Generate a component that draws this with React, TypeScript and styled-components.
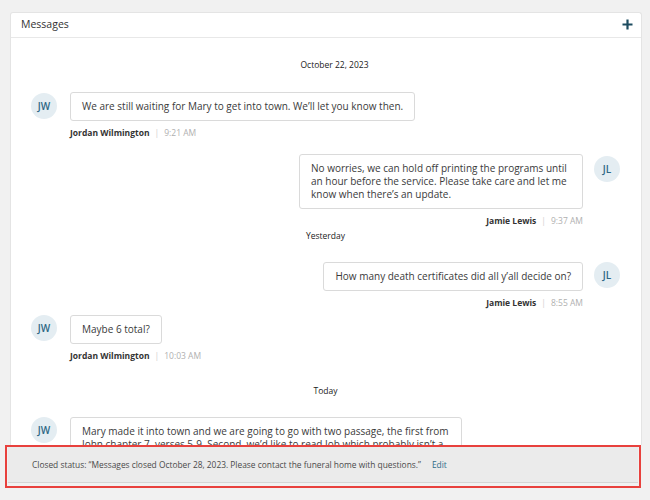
import React from "react";
import styled, { createGlobalStyle } from "styled-components";

const GlobalStyle = createGlobalStyle`
  html, body {
    margin: 0;
    padding: 0;
    background: #f1f1f1;
    font-family: "Open Sans", "Noto Sans", sans-serif;
    color: #333;
  }
`;

const Page = styled.div`
  width: 650px;
  height: 500px;
  overflow: hidden;
  padding-top: 12px;
  box-sizing: border-box;
  display: flex;
  flex-direction: column;
`;

const Card = styled.section`
  margin: 0 8px 0 10px;
  background: #fff;
  border: 1px solid #e4e4e4;
  border-bottom: none;
  border-radius: 3px 3px 0 0;
  display: flex;
  flex-direction: column;
`;

const Header = styled.header`
  height: 22px;
  display: flex;
  align-items: center;
  justify-content: space-between;
  padding: 0 8px 2px 10px;
  border-bottom: 1px solid #e8e8e8;
`;

const Title = styled.h2`
  margin: 0;
  font-size: 10.5px;
  font-weight: 400;
  color: #333;
`;

const AddButton = styled.button`
  border: none;
  background: none;
  padding: 0;
  width: 12px;
  height: 12px;
  display: flex;
  align-items: center;
  justify-content: center;
  cursor: pointer;
`;

const Thread = styled.div`
  height: 407px;
  overflow: hidden;
  display: flex;
  flex-direction: column;
  padding: 20px 21px 0 20px;
  box-sizing: border-box;
`;

const DateDivider = styled.div<{ $top: number; $shift?: number }>`
  margin-top: ${(p) => p.$top}px;
  text-align: center;
  font-size: 8.5px;
  font-weight: 500;
  line-height: 14px;
  color: #222;
  transform: translateX(${(p) => p.$shift || 0}px);
`;

const Group = styled.div<{ $mine?: boolean; $top: number }>`
  margin-top: ${(p) => p.$top}px;
  display: flex;
  flex-direction: column;
  align-items: ${(p) => (p.$mine ? "flex-end" : "flex-start")};
`;

const Row = styled.div<{ $mine?: boolean }>`
  display: flex;
  flex-direction: ${(p) => (p.$mine ? "row-reverse" : "row")};
  align-items: flex-start;
  gap: ${(p) => (p.$mine ? 11 : 13)}px;
`;

const Avatar = styled.div<{ $offset?: number }>`
  flex: none;
  width: 26px;
  height: 26px;
  border-radius: 50%;
  background: #e4edf2;
  color: #2d6784;
  font-size: 10px;
  font-weight: 600;
  display: flex;
  align-items: center;
  justify-content: center;
  margin-top: ${(p) => p.$offset || 0}px;
`;

const Bubble = styled.div<{ $max: number }>`
  box-sizing: border-box;
  max-width: ${(p) => p.$max}px;
  border: 1px solid #dadada;
  border-radius: 3px;
  background: #fff;
  padding: 7px 11px 7px 11px;
  font-size: 10px;
  line-height: 13px;
  color: #3a3a3a;
`;

const Meta = styled.div<{ $mine?: boolean }>`
  margin-top: 5px;
  ${(p) => (p.$mine ? "margin-right: 37px;" : "margin-left: 39px;")}
  font-size: 8.5px;
  line-height: 14px;
`;

const Author = styled.span`
  font-weight: 700;
  color: #333;
`;

const Time = styled.span`
  color: #b0b0b0;
  &::before {
    content: "|";
    color: #d0d0d0;
    margin: 0 5px 0 5px;
  }
`;

const StatusBar = styled.footer`
  margin: 0 9px 0 5px;
  height: 43px;
  box-sizing: border-box;
  border: 2px solid #e8413d;
  padding: 0 1px 3px 1px;
  background: #f1f1f1;
`;

const StatusInner = styled.div`
  height: 100%;
  box-sizing: border-box;
  background: #ebebeb;
  border-bottom: 1px solid #d5d5d5;
  display: flex;
  align-items: center;
  padding: 0 0 1px 24px;
  font-size: 8.4px;
  color: #4a4a4a;
  white-space: nowrap;
`;

const EditLink = styled.a`
  margin-left: 11px;
  color: #2f6b88;
  text-decoration: none;
  cursor: pointer;
`;

type Msg = {
  mine?: boolean;
  initials: string;
  author: string;
  time: string;
  text: string;
  top: number;
  max: number;
  avatarOffset?: number;
};

const MessageGroup = ({ m }: { m: Msg }) => (
  <Group $mine={m.mine} $top={m.top}>
    <Row $mine={m.mine}>
      <Avatar $offset={m.avatarOffset}>{m.initials}</Avatar>
      <Bubble $max={m.max}>{m.text}</Bubble>
    </Row>
    <Meta $mine={m.mine}>
      <Author>{m.author}</Author>
      <Time>{m.time}</Time>
    </Meta>
  </Group>
);

export default function App() {
  return (
    <>
      <GlobalStyle />
      <Page>
        <Card>
          <Header>
            <Title>Messages</Title>
            <AddButton aria-label="New message">
              <svg width="11" height="11" viewBox="0 0 11 11">
                <path d="M5.5 0.5v10M0.5 5.5h10" stroke="#1d4c60" strokeWidth="2.2" />
              </svg>
            </AddButton>
          </Header>
          <Thread>
            <DateDivider $top={0} $shift={9}>October 22, 2023</DateDivider>
            <MessageGroup
              m={{
                initials: "JW",
                author: "Jordan Wilmington",
                time: "9:21 AM",
                text: "We are still waiting for Mary to get into town. We’ll let you know then.",
                top: 20,
                max: 392,
                avatarOffset: 1,
              }}
            />
            <MessageGroup
              m={{
                mine: true,
                initials: "JL",
                author: "Jamie Lewis",
                time: "9:37 AM",
                text: "No worries, we can hold off printing the programs until an hour before the service. Please take care and let me know when there’s an update.",
                top: 14,
                max: 284,
                avatarOffset: 2,
              }}
            />
            <DateDivider $top={1}>Yesterday</DateDivider>
            <MessageGroup
              m={{
                mine: true,
                initials: "JL",
                author: "Jamie Lewis",
                time: "8:55 AM",
                text: "How many death certificates did all y’all decide on?",
                top: 19,
                max: 284,
              }}
            />
            <MessageGroup
              m={{
                initials: "JW",
                author: "Jordan Wilmington",
                time: "10:03 AM",
                text: "Maybe 6 total?",
                top: 5,
                max: 392,
              }}
            />
            <DateDivider $top={21}>Today</DateDivider>
            <MessageGroup
              m={{
                initials: "JW",
                author: "Jordan Wilmington",
                time: "10:15 AM",
                text: "Mary made it into town and we are going to go with two passage, the first from John chapter 7, verses 5-9. Second, we’d like to read Job which probably isn’t a typical choice but it meant a lot to her.",
                top: 19,
                max: 392,
              }}
            />
          </Thread>
        </Card>
        <StatusBar>
          <StatusInner>
            Closed status: “Messages closed October 28, 2023. Please contact the funeral home with questions.”
            <EditLink>Edit</EditLink>
          </StatusInner>
        </StatusBar>
      </Page>
    </>
  );
}
